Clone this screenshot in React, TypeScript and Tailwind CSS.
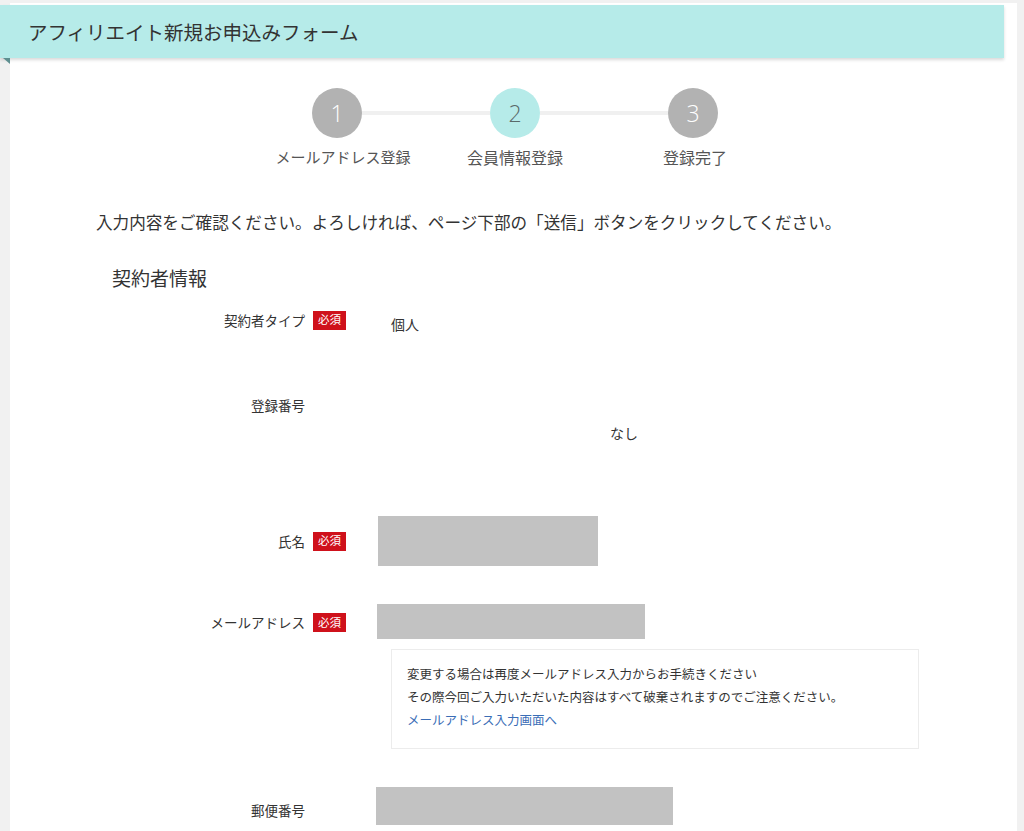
const font = { fontFamily: '"Noto Sans CJK JP", "Noto Sans", sans-serif' }

const Badge = () => (
  <span className="flex h-[19px] w-[33px] items-center justify-center bg-[#cf111b] text-[11.5px] leading-none text-white">必須</span>
)

const Row = ({ label, required, children, className, labelClass }: { label: string; required?: boolean; children?: React.ReactNode; className?: string; labelClass?: string }) => (
  <div className={'flex ' + (className || '')}>
    <div className={'flex w-[336px] shrink-0 items-center ' + (labelClass || '')}>
      <div className="w-[295px] text-right text-[13.5px] text-[#333]">{label}</div>
      <div className="ml-[8px] w-[33px]">{required && <Badge />}</div>
    </div>
    {children}
  </div>
)

const Step = ({ n, active }: { n: number; active?: boolean }) => (
  <div
    className={
      'flex h-[50px] w-[50px] shrink-0 items-center justify-center rounded-full text-[23px] ' +
      (active ? 'bg-[#b6ebe9] text-[#5a6a6a]' : 'bg-[#b2b2b2] text-white')
    }
    style={{ fontFamily: '"Open Sans", "Liberation Sans", sans-serif', fontWeight: 300 }}
  >
    {n}
  </div>
)

const App = () => {
  return (
    <div className="min-h-screen bg-[#f1f1f1] pt-[3px]" style={font}>
      <div className="ml-[10px] mr-[7px] min-h-[828px] bg-white pb-6">
        {/* header ribbon */}
        <div className="relative -ml-[10px] mr-[13px] pt-[2px]">
          <div className="flex h-[53px] items-center bg-[#b6ebe9] pl-[28px] text-[19.5px] text-[#333] shadow-[0_2px_3px_rgba(0,0,0,0.15)]">
            アフィリエイト新規お申込みフォーム
          </div>
          <svg className="absolute left-[3px] top-[55px]" width="7" height="6" viewBox="0 0 7 6">
            <polygon points="0,0 7,0 7,6" fill="#5e8f90" />
          </svg>
        </div>

        {/* steps */}
        <div className="ml-[302px] mt-[30px] flex w-[406px] items-center">
          <Step n={1} />
          <div className="h-[4px] flex-1 bg-[#f0f0f0]" />
          <Step n={2} active />
          <div className="h-[4px] flex-1 bg-[#f0f0f0]" />
          <Step n={3} />
        </div>
        <div className="ml-[238px] mt-[8px] flex w-[534px] text-[15.5px] leading-[22px] text-[#555]">
          <div className="w-[178px] pl-[12px] text-center text-[15px]">メールアドレス登録</div>
          <div className="w-[178px] text-center text-[16px]">会員情報登録</div>
          <div className="w-[178px] pl-[4px] text-center text-[16px]">登録完了</div>
        </div>

        <p className="ml-[86px] mt-[43px] text-[16.6px] leading-[22px] text-[#333]">
          入力内容をご確認ください。よろしければ、ページ下部の「送信」ボタンをクリックしてください。
        </p>

        <h2 className="ml-[102px] mt-[32px] text-[19px] leading-[26px] text-[#333]">契約者情報</h2>

        <Row label="契約者タイプ" required className="mt-[19px] h-[22px] items-start">
          <div className="ml-[45px] mt-[4px] text-[14px] text-[#333]">個人</div>
        </Row>

        <div className="mt-[62px] flex">
          <div className="w-[295px] text-right text-[13.5px] leading-[22px] text-[#333]">登録番号</div>
        </div>
        <div className="ml-[600px] mt-[6px] text-[14px] leading-[22px] text-[#333]">なし</div>

        <Row label="氏名" required className="mt-[72px] items-center">
          <div className="ml-[32px] h-[50px] w-[220px] bg-[#c2c2c2]" />
        </Row>

        <Row label="メールアドレス" required className="mt-[40px] items-center">
          <div className="ml-[31px] mt-[-2px] h-[35px] w-[268px] bg-[#c2c2c2]" />
        </Row>

        <div className="ml-[381px] mt-[10px] w-[528px] border border-[#ececec] px-[15px] pb-[17px] pt-[12px] text-[12.5px] leading-[23px] text-[#333]">
          <p>変更する場合は再度メールアドレス入力からお手続きください</p>
          <p>その際今回ご入力いただいた内容はすべて破棄されますのでご注意ください。</p>
          <a className="text-[#3a6db6]">メールアドレス入力画面へ</a>
        </div>

        <Row label="郵便番号" className="mt-[38px] items-start" labelClass="mt-[13px]">
          <div className="ml-[30px] h-[38px] w-[297px] bg-[#c2c2c2]" />
        </Row>
      </div>
    </div>
  )
}

export default App
